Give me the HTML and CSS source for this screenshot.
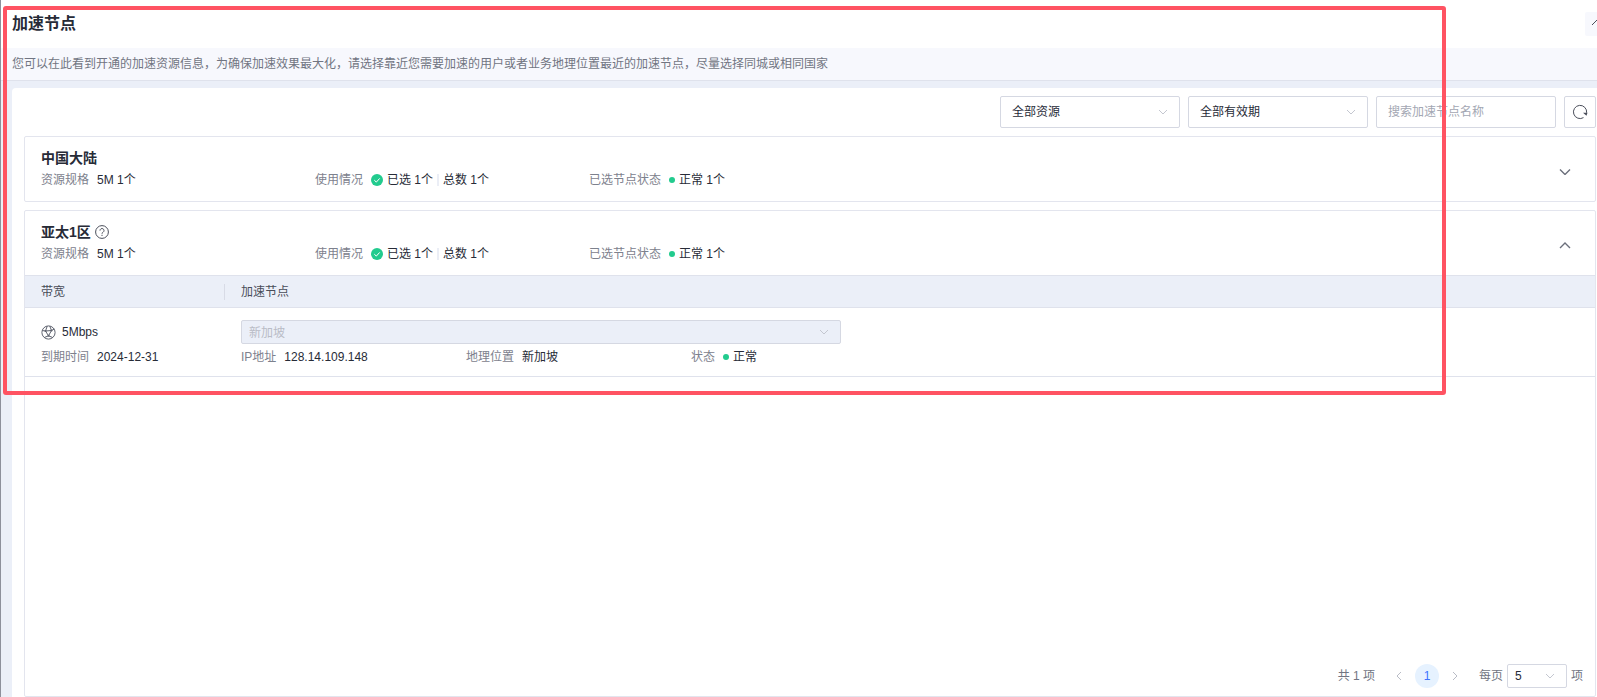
FILE: index.html
```html
<!DOCTYPE html>
<html lang="zh-CN">
<head>
    <meta charset="UTF-8">
    <meta name="viewport" content="width=device-width, initial-scale=1.0">
    <title>加速节点</title>
    <link rel="stylesheet" href="styles.css">
</head>
<body>
    <header class="page-header">
        <h1>加速节点</h1>
        <button class="collapse-btn" type="button" aria-label="收起">
            <svg width="24" height="24" viewBox="0 0 24 24"><path d="M7 13l5-5 5 5"/></svg>
        </button>
    </header>
    <p class="notice">您可以在此看到开通的加速资源信息，为确保加速效果最大化，请选择靠近您需要加速的用户或者业务地理位置最近的加速节点，尽量选择同城或相同国家</p>

    <main class="panel">
        <form class="filters">
            <div class="select-box">
                <select aria-label="资源">
                    <option>全部资源</option>
                </select>
                <svg class="arrow" width="10" height="6" viewBox="0 0 10 6"><path d="M1 1l4 4 4-4"/></svg>
            </div>
            <div class="select-box">
                <select aria-label="有效期">
                    <option>全部有效期</option>
                </select>
                <svg class="arrow" width="10" height="6" viewBox="0 0 10 6"><path d="M1 1l4 4 4-4"/></svg>
            </div>
            <input class="search" type="text" placeholder="搜索加速节点名称" aria-label="搜索加速节点名称">
            <button class="refresh-btn" type="button" aria-label="刷新">
                <svg width="16" height="16" viewBox="0 0 16 16"><path d="M11.500 13.600A6.600 6.600 0 1 1 14.600 8.800"/><path class="tip" d="M11 8.800h4.500l-1 3z"/></svg>
            </button>
        </form>

        <section class="region">
            <div class="region-head">
                <div class="region-info">
                    <h2>中国大陆</h2>
                    <div class="meta">
                        <div class="meta-item"><span class="label">资源规格</span><span>5M 1个</span></div>
                        <div class="meta-item">
                            <span class="label">使用情况</span>
                            <span class="value">
                                <svg class="check" width="12" height="12" viewBox="0 0 12 12"><circle cx="6" cy="6" r="6"/><path d="M3.300 6.200l2 1.900 3.400-3.700"/></svg>
                                <span>已选 1个</span><i class="sep"></i><span>总数 1个</span>
                            </span>
                        </div>
                        <div class="meta-item"><span class="label">已选节点状态</span><span class="value"><i class="dot"></i>正常 1个</span></div>
                    </div>
                </div>
                <button class="toggle-btn" type="button" aria-label="展开">
                    <svg width="12" height="12" viewBox="0 0 12 12"><path d="M1 6.500l5 5 5-5"/></svg>
                </button>
            </div>
        </section>

        <section class="region region-open">
            <div class="region-head">
                <div class="region-info">
                    <h2>
                        亚太1区
                        <svg class="help" width="14" height="14" viewBox="0 0 14 14"><circle cx="7" cy="7" r="6.400"/><path d="M5 5.600a2 2 0 1 1 3.100 1.600c-.8.500-1.100.8-1.100 1.500M7 9.800v1.200"/></svg>
                    </h2>
                    <div class="meta">
                        <div class="meta-item"><span class="label">资源规格</span><span>5M 1个</span></div>
                        <div class="meta-item">
                            <span class="label">使用情况</span>
                            <span class="value">
                                <svg class="check" width="12" height="12" viewBox="0 0 12 12"><circle cx="6" cy="6" r="6"/><path d="M3.300 6.200l2 1.900 3.400-3.700"/></svg>
                                <span>已选 1个</span><i class="sep"></i><span>总数 1个</span>
                            </span>
                        </div>
                        <div class="meta-item"><span class="label">已选节点状态</span><span class="value"><i class="dot"></i>正常 1个</span></div>
                    </div>
                </div>
                <button class="toggle-btn" type="button" aria-label="收起">
                    <svg width="12" height="12" viewBox="0 0 12 12"><path d="M1 11l5-5 5 5"/></svg>
                </button>
            </div>

            <table class="nodes">
                <thead>
                    <tr>
                        <th class="col-bandwidth"><div class="th-text">带宽</div></th>
                        <th>加速节点</th>
                    </tr>
                </thead>
                <tbody>
                    <tr>
                        <td>
                            <div class="bandwidth">
                                <svg class="globe" width="15" height="15" viewBox="0 0 15 15"><circle cx="7.500" cy="7.500" r="6.600"/><path d="M1.300 5.500l3.200.5 6-.5 2.800-1.500M4.500 6l3 4.800 3-5.300M4.500 6L6.200 1.200M10.500 5.500L8.800 1.200M7.500 10.800l-4.200 1.700M7.500 10.800l4.200 1.700"/><path class="knots" d="M4.500 6h.1M10.400 5.500h.1M7.500 10.800h.1"/></svg>
                                5Mbps
                            </div>
                            <div class="meta-item"><span class="label">到期时间</span><span>2024-12-31</span></div>
                        </td>
                        <td>
                            <div class="select-box node-select">
                                <select aria-label="加速节点" disabled>
                                    <option>新加坡</option>
                                </select>
                                <svg class="arrow" width="10" height="6" viewBox="0 0 10 6"><path d="M1 1l4 4 4-4"/></svg>
                            </div>
                            <div class="node-meta">
                                <div class="meta-item"><span class="label">IP地址</span><span>128.14.109.148</span></div>
                                <div class="meta-item"><span class="label">地理位置</span><span>新加坡</span></div>
                                <div class="meta-item"><span class="label">状态</span><span class="value"><i class="dot"></i>正常</span></div>
                            </div>
                        </td>
                    </tr>
                </tbody>
            </table>

            <nav class="pager" aria-label="分页">
                <span>共 1 项</span>
                <div class="pages">
                    <button type="button" aria-label="上一页"><svg width="6" height="10" viewBox="0 0 6 10"><path d="M5 1L1 5l4 4"/></svg></button>
                    <button type="button" class="current">1</button>
                    <button type="button" aria-label="下一页"><svg width="6" height="10" viewBox="0 0 6 10"><path d="M1 1l4 4-4 4"/></svg></button>
                </div>
                <label class="page-size">
                    每页
                    <span class="select-box size-select">
                        <select>
                            <option>5</option>
                        </select>
                        <svg class="arrow" width="10" height="6" viewBox="0 0 10 6"><path d="M1 1l4 4 4-4"/></svg>
                    </span>
                    项
                </label>
            </nav>
        </section>
    </main>

    <div class="highlight"></div>
</body>
</html>
```
FILE: styles.css
```css
* {
    box-sizing: border-box;
}
body {
    position: relative;
    display: flex;
    flex-direction: column;
    min-height: 100vh;
    margin: 0;
    border-left: 1px solid #8d909b;
    background: #ebeff8;
    color: #272b37;
    font-family: "Liberation Sans", "Noto Sans CJK SC", sans-serif;
    font-size: 12px;
    line-height: 22px;
    overflow-x: hidden;
}
button,
input,
select {
    font: inherit;
    color: inherit;
}
button {
    display: flex;
    align-items: center;
    justify-content: center;
    padding: 0;
    border: none;
    background: none;
    cursor: pointer;
}
svg {
    flex: none;
    fill: none;
    stroke: #4b4f5b;
}
h1,
h2,
p {
    margin: 0;
}

.page-header {
    display: flex;
    justify-content: space-between;
    height: 48px;
    padding: 12px 0 0 11px;
    background: #fff;
}
h1 {
    font-size: 16px;
    line-height: 24px;
}
.collapse-btn {
    width: 24px;
    height: 24px;
    margin-right: -12px;
    border-radius: 2px;
    background: #f7f8fd;
}
.notice {
    padding: 5px 11px;
    border-bottom: 1px solid #dfe2ec;
    background: #f7f8fd;
    color: #717582;
}

.panel {
    flex: 1;
    display: flex;
    flex-direction: column;
    gap: 8px;
    margin: 7px 0 0 11px;
    padding: 8px 1px 0 12px;
    border-radius: 4px 0 0 0;
    background: #fff;
}
.filters {
    display: flex;
    justify-content: flex-end;
    gap: 8px;
}
.select-box {
    position: relative;
    width: 180px;
    height: 32px;
}
.select-box select,
.search {
    width: 100%;
    height: 100%;
    padding: 0 11px;
    border: 1px solid #d5d8e2;
    border-radius: 2px;
    background: #fff;
    appearance: none;
    outline: none;
}
.search {
    width: 180px;
    height: 32px;
}
.search::placeholder {
    color: #a3a7b3;
}
.arrow {
    position: absolute;
    top: 50%;
    right: 12px;
    margin-top: -3px;
    stroke: #c4c7d0;
    pointer-events: none;
}
.refresh-btn {
    width: 32px;
    height: 32px;
    border: 1px solid #d5d8e2;
    border-radius: 2px;
}
.refresh-btn .tip {
    fill: #4b4f5b;
    stroke: none;
}

.region {
    border: 1px solid #e3e5ee;
    border-radius: 2px;
}
.region-open {
    flex: 1;
    display: flex;
    flex-direction: column;
}
.region-head {
    display: flex;
    align-items: center;
    justify-content: space-between;
    padding: 10px 24px 10px 16px;
}
.toggle-btn svg {
    stroke: #6b6f7b;
    stroke-width: 1.4;
}
h2 {
    display: flex;
    align-items: center;
    gap: 4px;
    font-size: 14px;
    line-height: 22px;
}
.meta {
    display: grid;
    grid-template-columns: repeat(3, 274px);
}
.meta-item {
    display: flex;
    gap: 8px;
    white-space: nowrap;
}
.label {
    color: #7d818d;
}
.value {
    display: flex;
    align-items: center;
    gap: 4px;
}
.check circle {
    fill: #22cb8e;
    stroke: none;
}
.check path {
    stroke: #fff;
}
.sep {
    width: 2px;
    height: 12px;
    background: #ebeef6;
}
.dot {
    width: 6px;
    height: 6px;
    border-radius: 50%;
    background: #22cb8e;
}

.nodes {
    width: 100%;
    border-collapse: separate;
    border-spacing: 0;
    table-layout: fixed;
}
.nodes th {
    height: 33px;
    padding: 0 0 0 16px;
    border-top: 1px solid #dfe2ec;
    border-bottom: 1px solid #dfe2ec;
    background: #ebeff8;
    color: #494d59;
    font-weight: normal;
    text-align: left;
}
.col-bandwidth {
    width: 200px;
}
.th-text {
    height: 16px;
    border-right: 1px solid #d8dbe6;
    line-height: 16px;
}
.nodes td {
    padding: 12px 0 6px 16px;
    border-bottom: 1px solid #dfe2ec;
    vertical-align: top;
    line-height: 24px;
}
.nodes .meta-item {
    line-height: 26px;
}
.bandwidth {
    display: flex;
    align-items: center;
    gap: 6px;
}
.globe {
    stroke: #5f636f;
}
.globe .knots {
    stroke-width: 2;
    stroke-linecap: round;
}
.node-select {
    width: 600px;
    height: 24px;
}
.node-select select {
    padding: 0 7px;
    background: #ebeff8;
    color: #b9bcc6;
    opacity: 1;
}
.node-meta {
    display: grid;
    grid-template-columns: repeat(3, 225px);
}

.pager {
    display: flex;
    align-items: center;
    justify-content: flex-end;
    gap: 12px;
    margin-top: auto;
    padding: 8px 12px;
    color: #717582;
}
.pages,
.page-size {
    display: flex;
    align-items: center;
    gap: 4px;
}
.pages button {
    width: 24px;
    height: 24px;
    border-radius: 50%;
}
.pages svg {
    stroke: #b9bcc6;
}
.pages .current {
    background: #e6f2ff;
    color: #3d72ff;
}
.size-select {
    width: 60px;
    height: 24px;
}
.size-select select {
    padding: 0 7px;
    color: #272b37;
}

/* frame drawn over the area being pointed out */
.highlight {
    position: absolute;
    top: 6px;
    left: 2px;
    right: 151px;
    height: 389px;
    border: 4px solid #ff5362;
    border-radius: 3px;
    pointer-events: none;
}
```
